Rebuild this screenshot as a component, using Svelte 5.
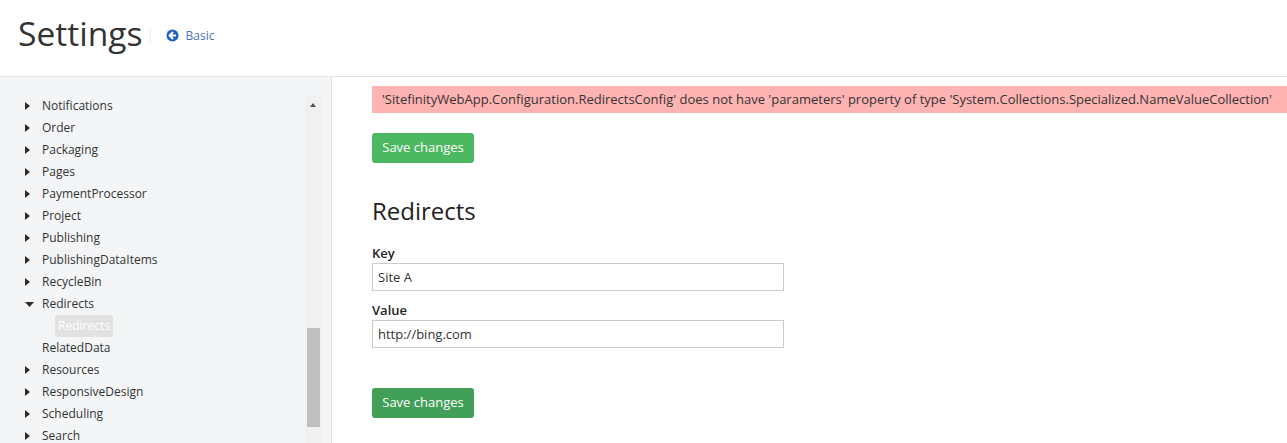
<script>
  const before = ['Notifications', 'Order', 'Packaging', 'Pages', 'PaymentProcessor', 'Project', 'Publishing', 'PublishingDataItems', 'RecycleBin'];
  const after = ['Resources', 'ResponsiveDesign', 'Scheduling', 'Search'];
</script>

{#snippet closed()}
  <svg class="arrow" width="18" height="8" viewBox="0 0 18 8" aria-hidden="true"><path d="M1 0 6 4 1 8Z" fill="#2b2b2b" /></svg>
{/snippet}

<div class="page">
  <header class="top">
    <h1>Settings</h1>
    <a class="back" href="#basic">
      <svg width="13" height="13" viewBox="0 0 13 13" aria-hidden="true">
        <circle cx="6.5" cy="6.5" r="6" fill="#1f5fbf" />
        <path d="M7 3 3.6 6.5 7 10M3.8 6.5H10" fill="none" stroke="#fff" stroke-width="2" />
      </svg>
      <span>Basic</span>
    </a>
  </header>

  <div class="body">
    <aside class="side">
      <ul class="tree">
        {#each before as name}
          <li>{@render closed()}{name}</li>
        {/each}
        <li>
          <svg class="arrow" width="18" height="5" viewBox="0 0 18 5" aria-hidden="true"><path d="M1 0H10L5.5 5Z" fill="#2b2b2b" /></svg>Redirects
        </li>
        <li class="sub"><span class="selected">Redirects</span></li>
        <li class="leaf">RelatedData</li>
        {#each after as name}
          <li>{@render closed()}{name}</li>
        {/each}
      </ul>
      <div class="scroll">
        <i class="up"></i>
        <div class="thumb"></div>
      </div>
    </aside>

    <main class="content">
      <div class="error">'SitefinityWebApp.Configuration.RedirectsConfig' does not have 'parameters' property of type 'System.Collections.Specialized.NameValueCollection'</div>
      <button class="save">Save changes</button>
      <h2>Redirects</h2>
      <label for="key">Key</label>
      <input id="key" type="text" value="Site A" />
      <label for="val">Value</label>
      <input id="val" type="text" value="http://bing.com" />
      <button class="save hover">Save changes</button>
    </main>
  </div>
</div>

<style>
  :global(body) {
    margin: 0;
    background: #fff;
  }
  .page {
    height: 443px;
    overflow: hidden;
    display: flex;
    flex-direction: column;
    font-family: "Open Sans", sans-serif;
    font-size: 13px;
    color: #333;
  }
  .top {
    flex: none;
    box-sizing: border-box;
    height: 77px;
    border-bottom: 1px solid #e4e4e4;
    padding: 0 0 10px 18px;
    display: flex;
    align-items: center;
  }
  h1 {
    margin: 0;
    font-size: 33.6px;
    font-weight: 400;
    line-height: 50px;
    color: #333;
  }
  .back {
    margin: 4px 0 0 7px;
    padding-left: 15px;
    border-left: 1px solid #eee;
    height: 15px;
    display: flex;
    align-items: center;
    gap: 7px;
    color: #4a72c0;
    text-decoration: none;
    font-size: 12px;
  }
  .body {
    flex: 1;
    display: flex;
    min-height: 0;
  }
  .side {
    position: relative;
    flex: none;
    box-sizing: border-box;
    width: 332px;
    background: #f4f5f7;
    border-right: 1px solid #e4e4e4;
    overflow: hidden;
  }
  .tree {
    list-style: none;
    margin: 0;
    padding: 18px 0 0 24px;
    font-size: 12px;
  }
  .tree li {
    height: 22px;
    line-height: 22px;
    display: flex;
    align-items: center;
    white-space: nowrap;
    color: #333;
  }
  .arrow {
    flex: none;
  }
  .leaf {
    padding-left: 18px;
  }
  .sub {
    padding-left: 31px;
  }
  .selected {
    display: block;
    height: 22px;
    padding: 0 3px;
    border-radius: 3px;
    background: #e2e2e2;
    color: #fff;
  }
  .scroll {
    position: absolute;
    left: 305px;
    top: 19px;
    bottom: 0;
    width: 17px;
    background: #f0f0f0;
  }
  .up {
    position: absolute;
    left: 5px;
    top: 7px;
    border-left: 3.5px solid transparent;
    border-right: 3.5px solid transparent;
    border-bottom: 4px solid #505050;
  }
  .thumb {
    position: absolute;
    left: 2px;
    top: 232px;
    width: 13px;
    height: 99px;
    background: #bfbfbf;
  }
  .content {
    flex: 1;
    min-width: 0;
    padding: 9px 0 0 40px;
    display: flex;
    flex-direction: column;
    align-items: flex-start;
  }
  .error {
    box-sizing: border-box;
    width: 100%;
    height: 27px;
    line-height: 27px;
    padding-left: 10px;
    background: #ffb3b3;
    color: #333;
    white-space: nowrap;
  }
  .save {
    box-sizing: border-box;
    width: 102px;
    height: 30px;
    margin: 20px 0 0;
    padding: 0 0 2px;
    border: 0;
    border-radius: 3px;
    background: #4cb962;
    color: #fff;
    font: 13px "Open Sans", sans-serif;
  }
  .save.hover {
    margin-top: 40px;
    background: #419f57;
  }
  h2 {
    margin: 32px 0 0;
    font-size: 24px;
    font-weight: 400;
    line-height: 32px;
    color: #222;
  }
  label {
    line-height: 19px;
    font-weight: 600;
    color: #222;
  }
  h2 + label {
    margin-top: 17px;
  }
  input + label {
    margin-top: 10px;
  }
  input {
    box-sizing: border-box;
    width: 412px;
    height: 28px;
    padding: 0 5px;
    border: 1px solid #ccc;
    font: 13px "Open Sans", sans-serif;
    color: #333;
    background: #fff;
    outline: none;
  }
</style>
